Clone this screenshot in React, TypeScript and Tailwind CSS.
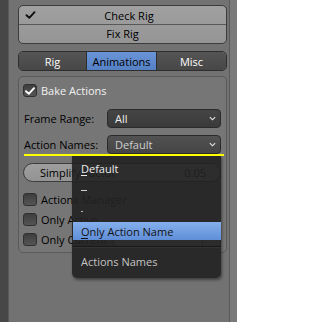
import React from "react";

const Check = ({ className }: { className?: string }) => (
  <svg viewBox="0 0 10 8" className={className}>
    <path d="M1 4.2 L3.8 6.8 L9 1.2" fill="none" stroke="currentColor" strokeWidth="1.9" strokeLinecap="round" strokeLinejoin="round" />
  </svg>
);

const Chevron = () => (
  <svg viewBox="0 0 8 5" className="w-[7px] h-[5px] text-[#e8e8e8]">
    <path d="M1 1 L4 4 L7 1" fill="none" stroke="currentColor" strokeWidth="1.3" />
  </svg>
);

const Box = ({ checked }: { checked?: boolean }) => (
  <div className="w-[14px] h-[13px] shrink-0 rounded-[3px] border border-[#303030] bg-gradient-to-b from-[#3e3e3e] to-[#555555] flex items-center justify-center">
    {checked && <Check className="w-[10px] h-[8px] text-white" />}
  </div>
);

const Dropdown = ({ text, dim }: { text: string; dim?: boolean }) => (
  <div className={`w-[114px] h-[19px] rounded-[4px] border border-[#2a2a2a] flex items-center justify-between pl-[7px] pr-[4px] ${dim ? "bg-gradient-to-b from-[#525252] to-[#454545] text-[#cfcfcf]" : "bg-gradient-to-b from-[#454545] to-[#3a3a3a] text-[#ececec]"}`}>
    <span>{text}</span>
    <Chevron />
  </div>
);

export default function App() {
  return (
    <div className="w-[237px] h-[322px] flex bg-[#727272] text-[11px] leading-none overflow-hidden" style={{ fontFamily: "'Open Sans', 'Noto Sans', sans-serif" }}>
      <div className="w-[8px] bg-[#474747]" />
      <div className="w-px bg-[#5a5a5a]" />
      <div className="w-[220px] relative pl-[9px] pr-[2px] pt-[5px]">
        {/* Check / Fix Rig */}
        <div className="h-[39px] rounded-[5px] border border-[#3c3c3c] bg-gradient-to-b from-[#a0a0a0] to-[#959595] flex flex-col text-black">
          <div className="h-[18px] flex items-center pl-[6px]">
            <Check className="w-[11px] h-[8px] text-[#111]" />
            <span className="flex-1 text-center pr-[4px]">Check Rig</span>
          </div>
          <div className="h-[18px] border-t border-[#585858] flex items-center justify-center">Fix Rig</div>
        </div>
        {/* tabs */}
        <div className="mt-[7px] h-[20px] rounded-[5px] border border-[#2e2e2e] flex overflow-hidden text-white">
          <div className="w-[67px] flex items-center justify-center bg-gradient-to-b from-[#555555] to-[#474747]">Rig</div>
          <div className="w-[71px] flex items-center justify-center bg-gradient-to-b from-[#6a95d8] to-[#5580c4] border-x border-[#2e2e2e] text-black">Animations</div>
          <div className="flex-1 flex items-center justify-center bg-gradient-to-b from-[#555555] to-[#474747]">Misc</div>
        </div>
        {/* box */}
        <div className="mt-[5px] h-[177px] rounded-[5px] border border-[#5a5a5a] bg-[#767676] pl-[4px] pr-[5px] pt-[7px] flex flex-col text-black">
          <div className="h-[13px] flex items-center gap-[4px]">
            <Box checked />
            <span className="text-[#f2f2f2]">Bake Actions</span>
          </div>
          <div className="mt-[12px] h-[19px] flex items-center">
            <span className="w-[84px] pl-[1px]">Frame Range:</span>
            <Dropdown text="All" />
          </div>
          <div className="mt-[7px] h-[19px] flex items-center">
            <span className="w-[84px] pl-[1px]">Action Names:</span>
            <Dropdown text="Default" dim />
          </div>
          <div className="mt-[9px] h-[19px] w-[198px] rounded-full border border-[#3c3c3c] bg-gradient-to-b from-[#9e9e9e] to-[#939393] flex items-center justify-between pl-[16px] pr-[14px]">
            <span>Simplify Factor</span>
            <span>0.05</span>
          </div>
          <div className="mt-[11px] h-[13px] flex items-center gap-[4px]">
            <Box />
            <span>Actions Manager</span>
          </div>
          <div className="mt-[7px] h-[13px] flex items-center gap-[4px]">
            <Box />
            <span>Only Active</span>
          </div>
          <div className="mt-[6px] h-[14px] flex items-center">
            <div className="flex items-center gap-[4px] w-[90px]">
              <Box />
              <span>Only Current</span>
            </div>
            <div className="w-[108px] h-[15px] rounded-[4px] border border-[#3c3c3c] bg-[#8f8f8f] flex">
              <div className="w-[89px] border-r border-[#3c3c3c]" />
            </div>
          </div>
        </div>

        {/* yellow line */}
        <div className="absolute left-[15px] top-[154px] w-[200px] h-[2px] bg-[#ffff00] z-20" />

        {/* dropdown menu */}
        <div className="absolute left-[63px] top-[155px] w-[149px] h-[123px] rounded-b-[5px] bg-[rgba(33,33,33,0.9)] shadow-[1px_2px_3px_rgba(0,0,0,0.45)] z-10 flex flex-col text-[#ececec]">
          <div className="h-[24px] flex items-center pl-[9px] pt-[2px]">
            <span className="relative">Default<span className="absolute left-0 top-[12px] w-[6px] h-px bg-[#ececec]" /></span>
          </div>
          <div className="h-[21px] flex items-center pl-[9px]">
            <span className="relative w-[6px] h-[11px]"><span className="absolute left-0 top-[6px] w-[6px] h-px bg-[#cfcfcf]" /></span>
          </div>
          <div className="h-[22px] flex items-center pl-[9px]">
            <span className="w-[2px] h-px bg-[#bdbdbd]" />
          </div>
          <div className="h-[18px] ml-[1px] bg-gradient-to-b from-[#86b0ec] to-[#5f8ed8] flex items-center pl-[8px] text-[#111]">
            <span className="relative">Only Action Name<span className="absolute left-0 top-[12px] w-[7px] h-px bg-[#111]" /></span>
          </div>
          <div className="mt-[6px] h-px bg-[#181818] ml-[1px]" />
          <div className="h-px bg-[#333333] ml-[1px]" />
          <div className="flex-1 flex items-center pl-[9px] pb-[4px] text-[#c4c4c4]">Actions Names</div>
        </div>
      </div>
      <div className="w-px bg-[#5a5a5a]" />
      <div className="flex-1 bg-[#7a7a7a]" />
    </div>
  );
}
